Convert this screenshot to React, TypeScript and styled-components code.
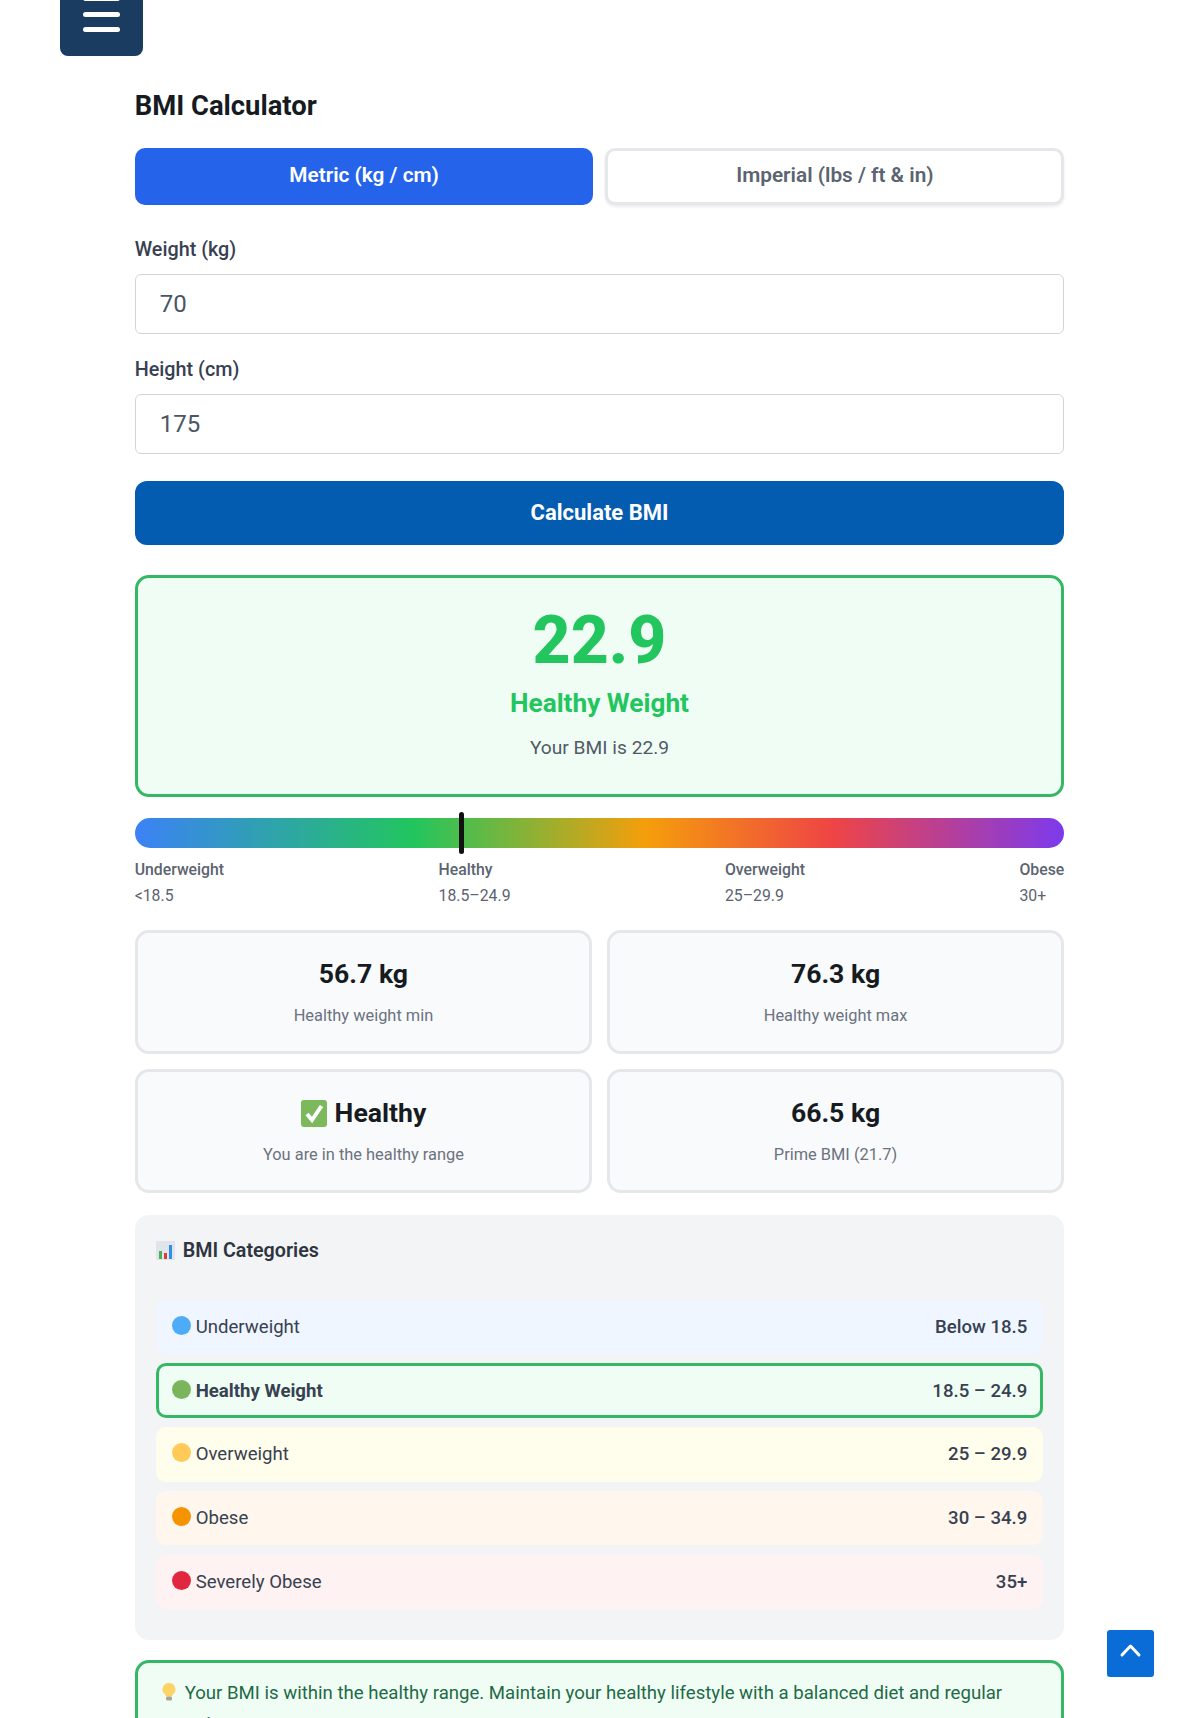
import React from 'react';
import styled, { createGlobalStyle } from 'styled-components';

const GlobalStyle = createGlobalStyle`
  html, body {
    margin: 0;
    height: 1718px;
    overflow: hidden;
    background: #fff;
    font-family: Roboto, 'Liberation Sans', sans-serif;
    color: #1f2937;
  }
  * { box-sizing: border-box; }
`;

const Page = styled.div`
  position: relative;
  height: 1718px;
  overflow: hidden;
`;

const TopBar = styled.div`
  height: 56px;
  padding-left: 60px;
  display: flex;
  align-items: flex-end;
`;

const MenuButton = styled.button`
  width: 83px;
  height: 72px;
  flex: none;
  border: 0;
  border-radius: 8px;
  background: #1a3c61;
  display: flex;
  flex-direction: column;
  align-items: center;
  justify-content: flex-end;
  gap: 10.5px;
  padding: 0 0 24px;
`;

const MenuLine = styled.span`
  width: 37px;
  height: 5px;
  border-radius: 3px;
  background: #fff;
`;

const Main = styled.main`
  width: 929.6px;
  margin-left: 134.7px;
`;

const Title = styled.h2`
  margin: 33px 0 25px;
  font-size: 27.4px;
  line-height: 34px;
  font-weight: 700;
  color: #161b22;
`;

const Tabs = styled.div`
  display: grid;
  grid-template-columns: 1fr 1fr;
  gap: 12px;
`;

const Tab = styled.button<{ $active?: boolean }>`
  height: 57px;
  padding: 0 0 3px;
  border-radius: 10px;
  border: ${(p) => (p.$active ? '0' : '3px solid #e5e7eb')};
  background: ${(p) => (p.$active ? '#2563eb' : '#fff')};
  color: ${(p) => (p.$active ? '#fff' : '#5b6470')};
  box-shadow: ${(p) => (p.$active ? 'none' : '0 2px 3px rgba(0, 0, 0, 0.08)')};
  font: 600 20.8px Roboto, sans-serif;
`;

const Field = styled.div`
  margin-top: 33px;
  & + & { margin-top: 24px; }
`;

const Label = styled.label`
  display: block;
  margin-bottom: 12px;
  font-size: 19.8px;
  line-height: 24px;
  font-weight: 500;
  color: #374151;
`;

const Input = styled.input`
  display: block;
  width: 100%;
  height: 60px;
  padding: 0 24px;
  border: 1.5px solid #d1d5db;
  border-radius: 6px;
  background: #fff;
  font: 400 24px Roboto, sans-serif;
  color: #4b5563;
`;

const Calculate = styled.button`
  display: block;
  width: 100%;
  height: 64px;
  margin-top: 27px;
  padding: 0 0 2px;
  border: 0;
  border-radius: 12px;
  background: #045cb0;
  color: #fff;
  font: 700 22px Roboto, sans-serif;
`;

const Result = styled.section`
  height: 222px;
  margin-top: 30px;
  border: 3px solid #34b865;
  border-radius: 14px;
  background: #f0fdf4;
  display: flex;
  flex-direction: column;
  align-items: center;
  padding-top: 26px;
`;

const Score = styled.div`
  font-size: 66px;
  line-height: 74px;
  font-weight: 800;
  color: #22c55e;
`;

const Verdict = styled.div`
  margin-top: 9px;
  font-size: 26.2px;
  line-height: 32px;
  font-weight: 700;
  color: #22c55e;
`;

const ResultNote = styled.div`
  margin-top: 15px;
  font-size: 19.2px;
  line-height: 28px;
  color: #525a66;
`;

const ScaleBar = styled.div`
  position: relative;
  height: 30px;
  margin-top: 21px;
  border-radius: 15px;
  background: linear-gradient(90deg, #3b82f6 0%, #22c55e 30%, #f59e0b 55%, #ef4444 75%, #7c3aed 100%);
`;

const Marker = styled.span`
  position: absolute;
  left: 324px;
  top: -6px;
  width: 5px;
  height: 42px;
  border-radius: 3px;
  background: #111;
`;

const ScaleLegend = styled.div`
  display: flex;
  justify-content: space-between;
  margin-top: 9px;
`;

const LegendItem = styled.div`
  font-size: 15.8px;
  line-height: 26px;
  color: #5b6470;
`;

const LegendName = styled.div`
  font-weight: 500;
`;

const Stats = styled.div`
  display: grid;
  grid-template-columns: 1fr 1fr;
  gap: 15px 14.5px;
  margin-top: 21px;
`;

const Stat = styled.div`
  height: 124px;
  border: 3px solid #e5e7eb;
  border-radius: 14px;
  background: #f9fafb;
  display: flex;
  flex-direction: column;
  align-items: center;
  padding-top: 24px;
`;

const StatValue = styled.div`
  display: flex;
  align-items: center;
  gap: 8px;
  font-size: 26.6px;
  line-height: 34px;
  font-weight: 700;
  color: #161b22;
`;

const StatLabel = styled.div`
  margin-top: 13px;
  font-size: 16.4px;
  line-height: 24px;
  color: #6b7280;
`;

const Categories = styled.section`
  height: 425px;
  margin-top: 21.5px;
  padding: 21px 21px;
  border-radius: 14px;
  background: #f3f4f6;
`;

const CategoriesTitle = styled.h3`
  margin: 0 0 34px;
  display: flex;
  align-items: center;
  gap: 8px;
  font-size: 19.7px;
  line-height: 30px;
  font-weight: 600;
  color: #2d3540;
`;

const CategoryList = styled.div`
  display: flex;
  flex-direction: column;
  gap: 9.3px;
`;

const Category = styled.div<{ $bg: string; $current?: boolean }>`
  height: 54.5px;
  display: flex;
  align-items: center;
  justify-content: space-between;
  border-radius: 10px;
  border: ${(p) => (p.$current ? '3px solid #34b865' : '0')};
  padding-left: ${(p) => (p.$current ? '13px' : '16px')};
  padding-right: ${(p) => (p.$current ? '13px' : '16px')};
  background: ${(p) => p.$bg};
  font-size: 18.6px;
  color: #374151;
`;

const CategoryName = styled.span<{ $current?: boolean }>`
  display: flex;
  align-items: center;
  gap: 5px;
  font-weight: ${(p) => (p.$current ? 700 : 400)};
`;

const Dot = styled.span<{ $color: string }>`
  width: 19px;
  height: 19px;
  margin-top: -3px;
  border-radius: 50%;
  background: ${(p) => p.$color};
`;

const CategoryRange = styled.span`
  font-weight: 500;
`;

const Advice = styled.section`
  height: 120px;
  margin-top: 20px;
  padding: 15px 24px;
  border: 3px solid #34b865;
  border-radius: 14px;
  background: #f0fdf4;
  font-size: 18.6px;
  line-height: 31px;
  color: #1f6a46;
`;

const InlineIcon = styled.svg`
  display: inline-block;
  vertical-align: -2px;
  margin-right: 9px;
`;

const ScrollTop = styled.button`
  position: absolute;
  left: 1107px;
  top: 1630px;
  width: 47px;
  height: 47px;
  padding: 0;
  border: 0;
  border-radius: 3px;
  background: #0a6cd6;
  display: flex;
  align-items: flex-start;
  justify-content: center;
`;

const CheckEmoji = () => (
  <svg width="26" height="27" viewBox="0 0 26 27">
    <rect width="26" height="27" rx="3" fill="#7cb85c" />
    <path d="M6 14l5 6L20.5 6" fill="none" stroke="#fff" strokeWidth="4" />
  </svg>
);

const ChartEmoji = () => (
  <svg width="19" height="19" viewBox="0 0 19 19">
    <rect width="19" height="19" rx="1" fill="#dfe5ea" />
    <rect x="3" y="10" width="3" height="8" fill="#4caf50" />
    <rect x="8" y="12" width="3" height="6" fill="#e53935" />
    <rect x="13" y="4" width="3" height="14" fill="#2f8fe6" />
  </svg>
);

const BulbEmoji = () => (
  <InlineIcon width="14" height="18" viewBox="0 0 14 18">
    <path d="M7 0a6.5 6.5 0 0 0-4 11.6c.7.6 1 1.2 1 2h6c0-.8.3-1.4 1-2A6.5 6.5 0 0 0 7 0z" fill="#fdd367" />
    <rect x="4" y="13.5" width="6" height="4" rx="1.5" fill="#a8a59a" />
  </InlineIcon>
);

const legend = [
  { name: 'Underweight', range: '<18.5' },
  { name: 'Healthy', range: '18.5–24.9' },
  { name: 'Overweight', range: '25–29.9' },
  { name: 'Obese', range: '30+' },
];

const categories = [
  { name: 'Underweight', range: 'Below 18.5', bg: '#eff6ff', dot: '#4dabf7' },
  { name: 'Healthy Weight', range: '18.5 – 24.9', bg: '#f0fdf4', dot: '#7ab55c', current: true },
  { name: 'Overweight', range: '25 – 29.9', bg: '#fffdeb', dot: '#ffca58' },
  { name: 'Obese', range: '30 – 34.9', bg: '#fff7ed', dot: '#f59300' },
  { name: 'Severely Obese', range: '35+', bg: '#fef2f2', dot: '#e0273f' },
];

export default function App() {
  return (
    <Page>
      <GlobalStyle />
      <TopBar>
        <MenuButton aria-label="Menu">
          <MenuLine />
          <MenuLine />
          <MenuLine />
        </MenuButton>
      </TopBar>
      <Main>
        <Title>BMI Calculator</Title>
        <Tabs>
          <Tab $active>Metric (kg / cm)</Tab>
          <Tab>Imperial (lbs / ft &amp; in)</Tab>
        </Tabs>
        <Field>
          <Label>Weight (kg)</Label>
          <Input defaultValue="70" />
        </Field>
        <Field>
          <Label>Height (cm)</Label>
          <Input defaultValue="175" />
        </Field>
        <Calculate>Calculate BMI</Calculate>
        <Result>
          <Score>22.9</Score>
          <Verdict>Healthy Weight</Verdict>
          <ResultNote>Your BMI is 22.9</ResultNote>
        </Result>
        <ScaleBar>
          <Marker />
        </ScaleBar>
        <ScaleLegend>
          {legend.map((item) => (
            <LegendItem key={item.name}>
              <LegendName>{item.name}</LegendName>
              <div>{item.range}</div>
            </LegendItem>
          ))}
        </ScaleLegend>
        <Stats>
          <Stat>
            <StatValue>56.7 kg</StatValue>
            <StatLabel>Healthy weight min</StatLabel>
          </Stat>
          <Stat>
            <StatValue>76.3 kg</StatValue>
            <StatLabel>Healthy weight max</StatLabel>
          </Stat>
          <Stat>
            <StatValue>
              <CheckEmoji />
              Healthy
            </StatValue>
            <StatLabel>You are in the healthy range</StatLabel>
          </Stat>
          <Stat>
            <StatValue>66.5 kg</StatValue>
            <StatLabel>Prime BMI (21.7)</StatLabel>
          </Stat>
        </Stats>
        <Categories>
          <CategoriesTitle>
            <ChartEmoji />
            BMI Categories
          </CategoriesTitle>
          <CategoryList>
            {categories.map((c) => (
              <Category key={c.name} $bg={c.bg} $current={c.current}>
                <CategoryName $current={c.current}>
                  <Dot $color={c.dot} />
                  {c.name}
                </CategoryName>
                <CategoryRange>{c.range}</CategoryRange>
              </Category>
            ))}
          </CategoryList>
        </Categories>
        <Advice>
          <BulbEmoji />
          Your BMI is within the healthy range. Maintain your healthy lifestyle with a balanced diet and regular exercise.
        </Advice>
      </Main>
      <ScrollTop aria-label="Back to top">
        <svg width="47" height="47" viewBox="0 0 47 47">
          <path d="M15 25l8.5-9L32 25" fill="none" stroke="#fff" strokeWidth="3" strokeLinecap="round" strokeLinejoin="round" />
        </svg>
      </ScrollTop>
    </Page>
  );
}
